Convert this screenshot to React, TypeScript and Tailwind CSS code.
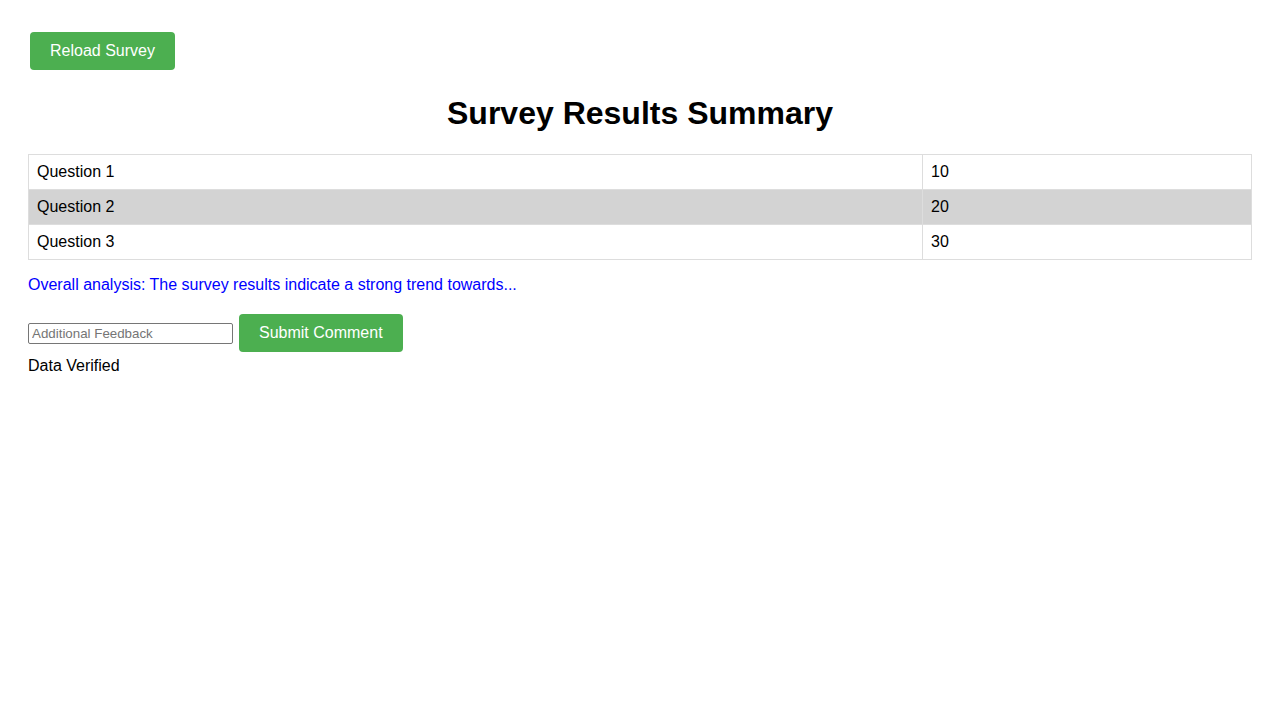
export default function App() {
  const rows = [
    { q: "Question 1", v: "10" },
    { q: "Question 2", v: "20" },
    { q: "Question 3", v: "30" },
  ];

  return (
    <div className="min-h-screen bg-white p-[28px] font-['Liberation_Sans',Arial,sans-serif] text-black text-[16px]">
      <button className="mx-[2px] my-[4px] bg-[#4caf50] text-white px-[20px] py-[10px] leading-[18px] rounded-[4px] text-[16px]">
        Reload Survey
      </button>

      <h1 className="text-center text-[32px] font-bold leading-[37px] my-[21.44px]">
        Survey Results Summary
      </h1>

      <table className="w-full border-collapse">
        <tbody>
          {rows.map((row, i) => (
            <tr key={row.q} className={i === 1 ? "bg-[#d3d3d3]" : ""}>
              <td className="w-[894px] border border-[#ddd] px-[8px] py-[8px] leading-[18px]">
                {row.q}
              </td>
              <td className="border border-[#ddd] px-[8px] py-[8px] leading-[18px]">
                {row.v}
              </td>
            </tr>
          ))}
        </tbody>
      </table>

      <p className="my-[16px] text-[#0000ff] leading-[18px]">
        Overall analysis: The survey results indicate a strong trend towards...
      </p>

      <div className="flex items-start pb-[1px]">
        <input
          type="text"
          placeholder="Additional Feedback"
          className="mt-[13px] w-[205px] h-[21px] border border-[#767676] rounded-[2px] px-[3px] text-[13.33px] placeholder:text-[#757575] outline-none"
        />
        <button className="ml-[6px] mr-[2px] my-[4px] bg-[#4caf50] text-white px-[20px] py-[10px] leading-[18px] rounded-[4px] text-[16px]">
          Submit Comment
        </button>
      </div>

      <div className="leading-[18px]">Data Verified</div>
    </div>
  );
}
